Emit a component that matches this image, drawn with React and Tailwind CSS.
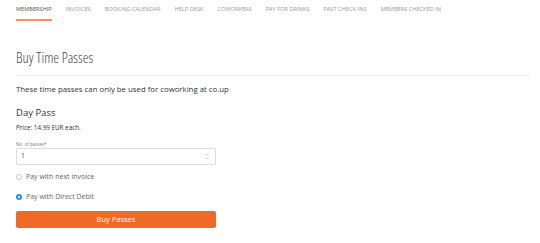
import React, { useState } from 'react';

const tabs = [
  'Membership',
  'Invoices',
  'Booking Calendar',
  'Help Desk',
  'Coworkers',
  'Pay for Drinks',
  'Past Check-ins',
  'Members Checked In',
];

function Radio({ checked, label, onClick }) {
  return (
    <label onClick={onClick} className="flex items-center gap-[4px] h-[10px] cursor-pointer">
      {checked ? (
        <span className="w-[6px] h-[6px] rounded-full bg-[#2f8cf0] flex items-center justify-center">
          <span className="w-[2px] h-[2px] rounded-full bg-white"></span>
        </span>
      ) : (
        <span className="w-[6px] h-[6px] rounded-full border border-[#c8c8c8] bg-white"></span>
      )}
      <span className="text-[7px] leading-[10px] text-[#666]">{label}</span>
    </label>
  );
}

export default function App() {
  const [pay, setPay] = useState('debit');
  const [count, setCount] = useState('1');

  return (
    <div className="w-[540px] h-[243px] bg-white overflow-hidden font-['Open_Sans',sans-serif] text-[#333]">
      {/* tabs */}
      <div className="flex gap-[14px] pl-4">
        {tabs.map((t, i) => (
          <div
            key={t}
            className={
              'pt-[6px] pb-[6px] leading-[7px] text-[5.65px] uppercase border-b-2 ' +
              (i === 0 ? 'border-[#f39162] text-[#555]' : 'border-transparent text-[#999]')
            }
          >
            {t}
          </div>
        ))}
      </div>

      <div className="pl-4 pr-[10px]">
        <h1 className="mt-[27px] text-[14.5px] leading-[20px] font-light font-stretch-condensed text-[#444] pb-[7px] border-b border-[#ececec]">
          Buy Time Passes
        </h1>

        <p className="mt-[8px] text-[7.8px] leading-[10px]">
          These time passes can only be used for coworking at co.up
        </p>

        <h2 className="mt-[12px] text-[9.5px] leading-[14px] text-[#333]">Day Pass</h2>
        <p className="mt-[3px] text-[6.3px] leading-[10px]">Price: 14.99 EUR each.</p>

        <div className="w-[200px]">
          <div className="mt-[8px] text-[4.5px] leading-[6px] text-[#777]">No. of passes*</div>
          <div className="mt-[1px] h-[17px] border border-[#dcdcdc] rounded-[2px] flex items-center justify-between px-[4px]">
            <input
              value={count}
              onChange={(e) => setCount(e.target.value)}
              className="w-[150px] text-[7px] text-[#555] outline-none bg-transparent"
            />
            <svg width="5" height="7" viewBox="0 0 5 7" className="mr-[1px]">
              <path d="M1 2.5 L2.5 1 L4 2.5" stroke="#b5b5b5" strokeWidth="0.7" fill="none" />
              <path d="M1 4.5 L2.5 6 L4 4.5" stroke="#b5b5b5" strokeWidth="0.7" fill="none" />
            </svg>
          </div>

          <div className="mt-[7px]">
            <Radio checked={pay === 'invoice'} label="Pay with next invoice" onClick={() => setPay('invoice')} />
          </div>
          <div className="mt-[10px]">
            <Radio checked={pay === 'debit'} label="Pay with Direct Debit" onClick={() => setPay('debit')} />
          </div>

          <button className="mt-[9px] w-full h-[17px] rounded-[2px] bg-[#ef6a27] text-white text-[7.5px] leading-[17px]">
            Buy Passes
          </button>
        </div>
      </div>
    </div>
  );
}
